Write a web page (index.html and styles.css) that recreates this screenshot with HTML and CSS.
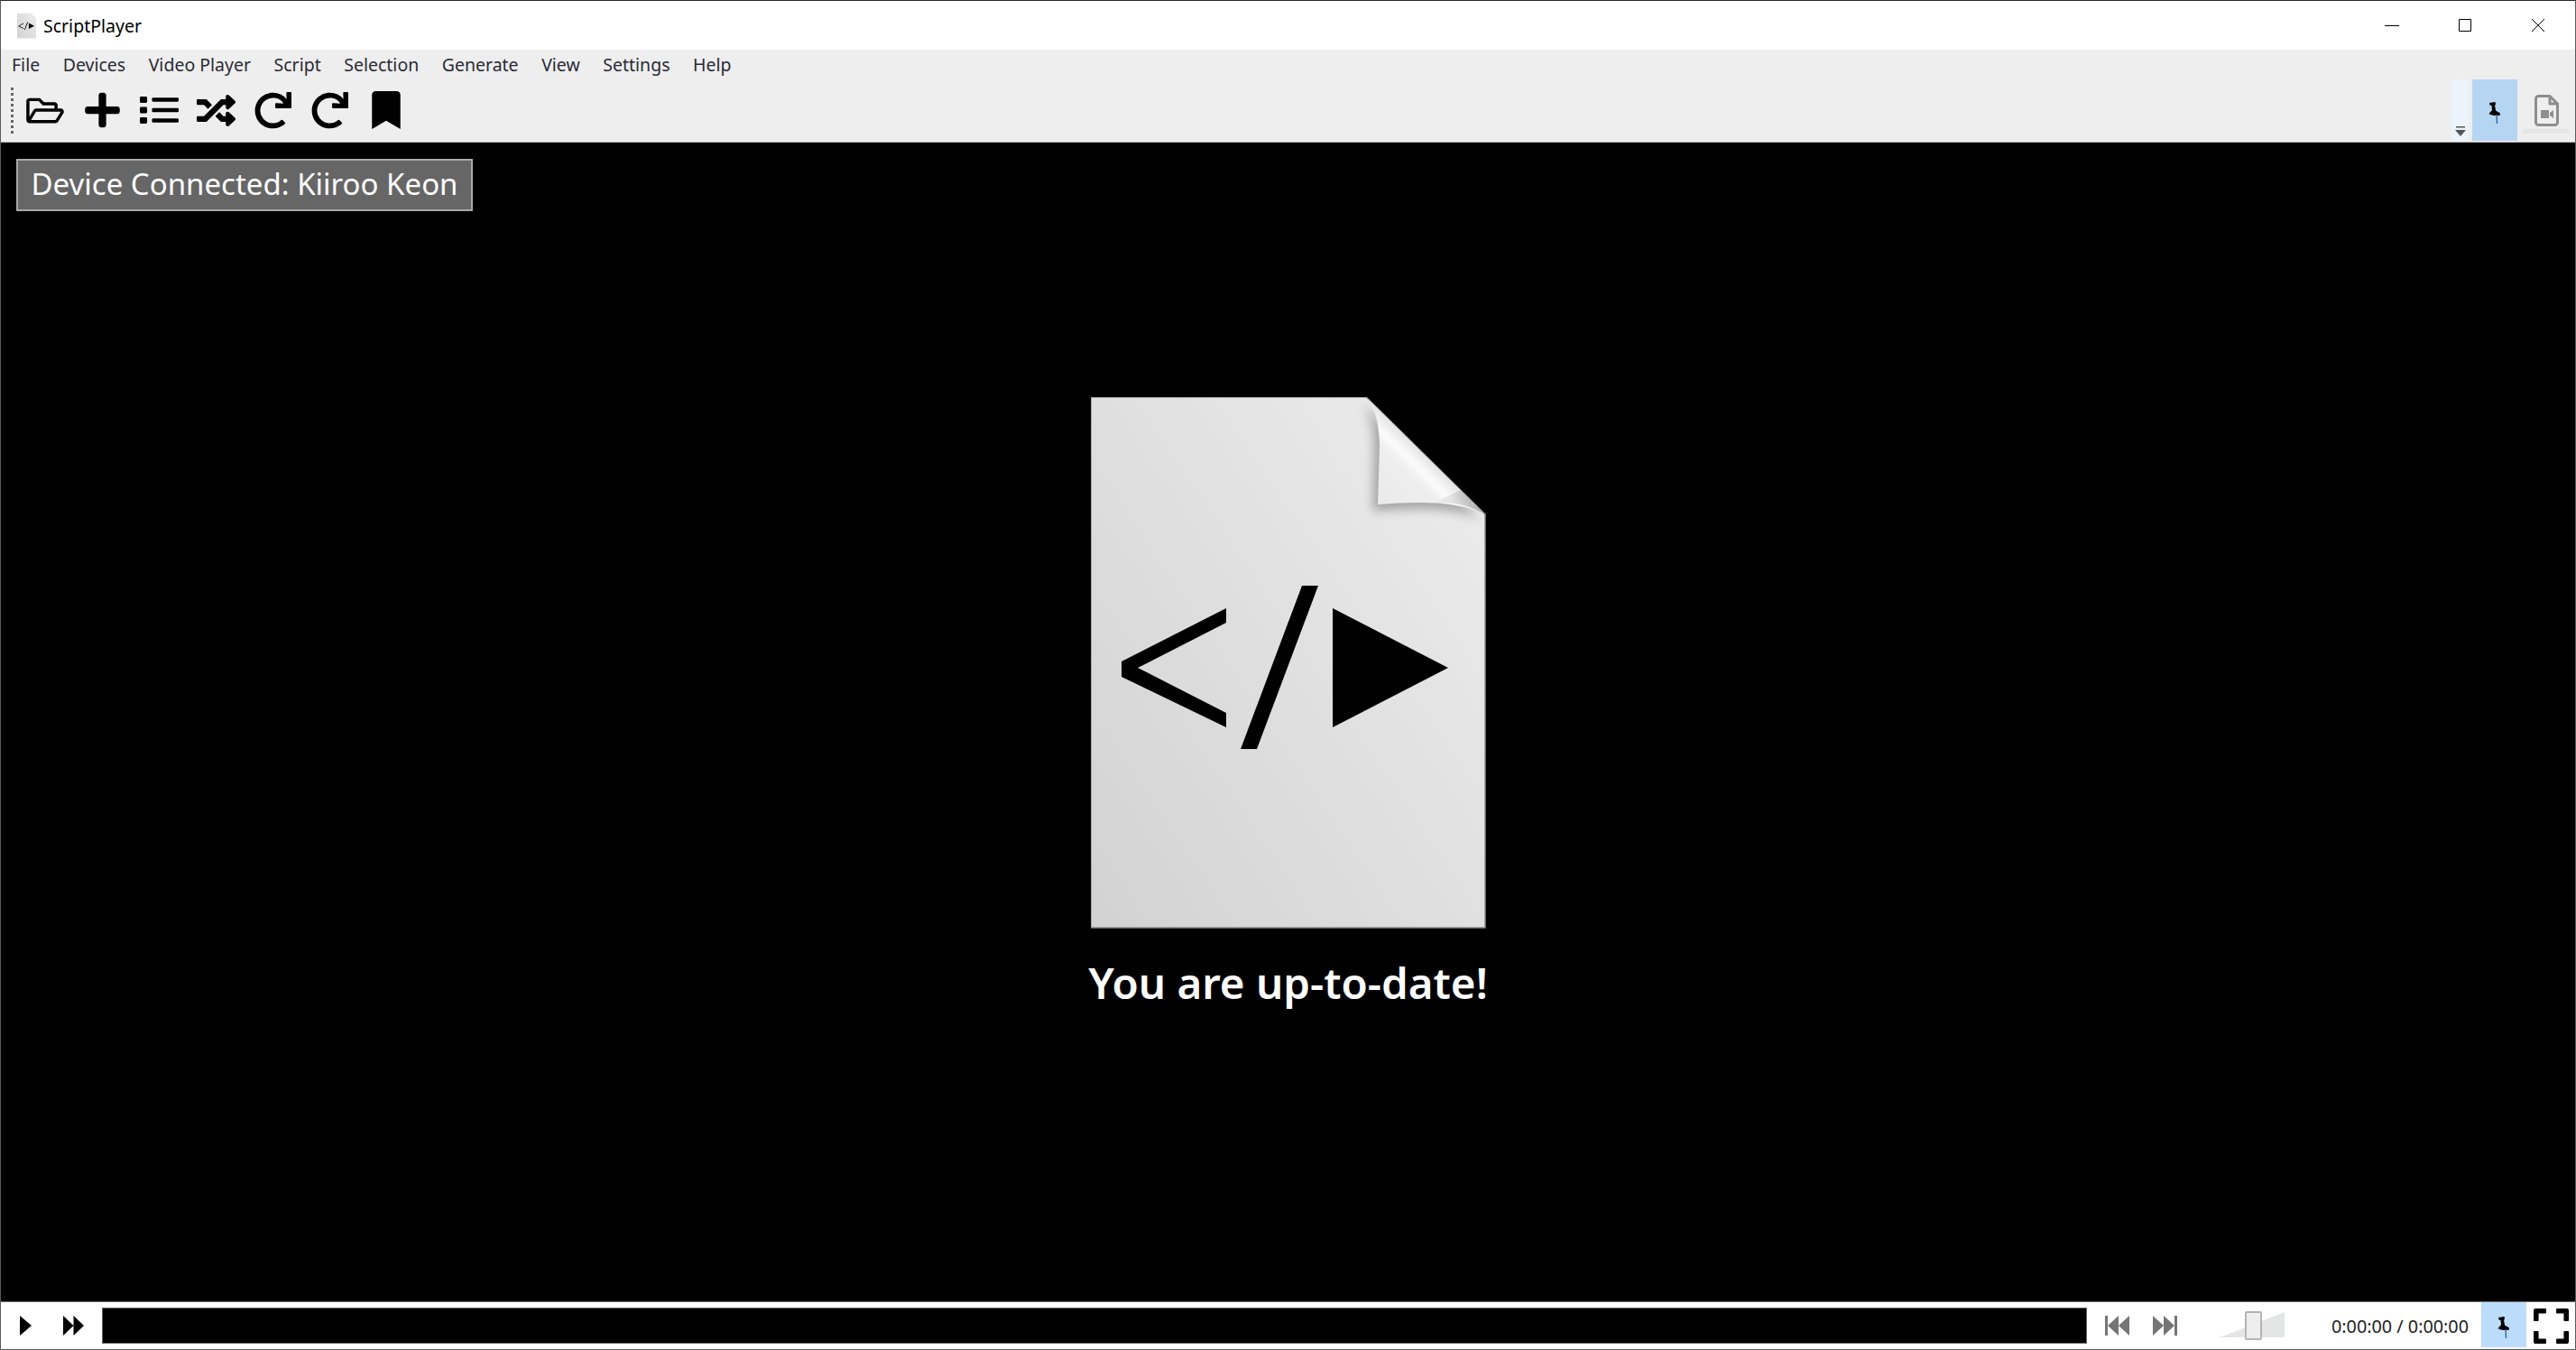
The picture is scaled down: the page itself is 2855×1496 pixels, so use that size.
FILE: index.html
```html
<!DOCTYPE html>
<html lang="en">
<head>
<meta charset="utf-8">
<title>ScriptPlayer</title>
<link rel="stylesheet" href="styles.css">
</head>
<body>
<svg class="defs" width="0" height="0" aria-hidden="true">
  <defs>
    <symbol id="pin" viewBox="0 0 16 24">
      <path d="M2 1 8.500 0 9 3 8 3.500 9 9.500 14 12.500 13.500 15 7 15 3 14 1.500 13 5 9 4.500 4 2.500 3.500Z" fill="#000"/>
      <path d="M10 14 10.500 24" stroke="#3a6ea5" stroke-width="1.500" fill="none"/>
    </symbol>
    <symbol id="redo" viewBox="0 0 512 512">
      <path d="M500.33 0h-47.41a12 12 0 0 0-12 12.57l4 82.76A247.42 247.42 0 0 0 256 8C119.34 8 8.9 119.53 8 256.19 7.1 393.07 118.1 504 256 504a247.1 247.1 0 0 0 166.18-63.91 12 12 0 0 0 .48-17.43l-34-34a12 12 0 0 0-16.38-.55A176 176 0 1 1 402.1 157.8l-101.53-4.87a12 12 0 0 0-12.57 12v47.41a12 12 0 0 0 12 12h200.33a12 12 0 0 0 12-12V12a12 12 0 0 0-12-12z"/>
    </symbol>
    <symbol id="doc" viewBox="0 0 438 589">
      <path d="M0 0H305L437 130V588H0Z" fill="url(#page)" stroke="#8c8c8c" stroke-width="1.500"/>
      <path d="M34 293 150 234V250L52 300 150 350V366L34 310Z"/>
      <path d="M234 209H252L184 390H166Z"/>
      <path d="M268 234 396 300 268 366Z"/>
    </symbol>
    <linearGradient id="page" x1="0" y1="1" x2="1" y2="0.1">
      <stop offset="0" stop-color="#d2d2d2"/>
      <stop offset="0.55" stop-color="#e0e0e0"/>
      <stop offset="1" stop-color="#ececec"/>
    </linearGradient>
    <linearGradient id="fold" x1="0" y1="1" x2="1" y2="0">
      <stop offset="0" stop-color="#e8e8e8"/>
      <stop offset="0.35" stop-color="#eeeeee"/>
      <stop offset="0.42" stop-color="#fbfbfb"/>
      <stop offset="0.5" stop-color="#e4e4e4"/>
      <stop offset="0.56" stop-color="#d8d8d8"/>
      <stop offset="1" stop-color="#d8d8d8"/>
    </linearGradient>
    <linearGradient id="foldTip" x1="0" y1="0" x2="1" y2="0">
      <stop offset="0" stop-color="#999" stop-opacity="0"/>
      <stop offset="1" stop-color="#999" stop-opacity=".7"/>
    </linearGradient>
    <filter id="soft" x="-30%" y="-30%" width="160%" height="160%"><feGaussianBlur stdDeviation="6"/></filter>
    <clipPath id="pageclip"><path d="M0 0H305L437 130V588H0Z"/></clipPath>
  </defs>
</svg>

<div class="window">
  <header class="titlebar">
    <svg class="app-icon" viewBox="0 0 438 589"><use href="#doc"/></svg>
    <span class="app-title">ScriptPlayer</span>
    <div class="win-controls">
      <svg class="win-btn" viewBox="0 0 16 16"><path d="M0 8.500H16" stroke="#000" fill="none"/></svg>
      <svg class="win-btn" viewBox="0 0 16 16"><path d="M1.500 1.500H14.500V14.500H1.500Z" stroke="#000" fill="none"/></svg>
      <svg class="win-btn" viewBox="0 0 16 16"><path d="M1 1 15 15M15 1 1 15" stroke="#000" fill="none"/></svg>
    </div>
  </header>

  <nav class="menubar">
    <span class="menu-item">File</span>
    <span class="menu-item">Devices</span>
    <span class="menu-item">Video Player</span>
    <span class="menu-item">Script</span>
    <span class="menu-item">Selection</span>
    <span class="menu-item">Generate</span>
    <span class="menu-item">View</span>
    <span class="menu-item">Settings</span>
    <span class="menu-item">Help</span>
  </nav>

  <div class="toolbar">
    <div class="gripper"></div>
    <div class="tool"><svg class="ic-folder" viewBox="0 0 576 512"><path d="M527.9 224H480v-48c0-26.5-21.5-48-48-48H272l-64-64H48C21.5 64 0 85.5 0 112v288c0 26.5 21.500 48 48 48h400c16.500 0 31.900-8.500 40.700-22.600l79.900-128c20-31.900-3-73.400-40.700-73.400zM48 118c0-3.300 2.700-6 6-6h134.100l64 64H426c3.300 0 6 2.700 6 6v42H152c-16.800 0-32.400 8.800-41.100 23.200L48 351.400zm400 282H72l77.200-128H528z"/></svg></div>
    <div class="tool"><svg class="ic-plus" viewBox="0 0 448 512"><path d="M416 208H272V64c0-17.670-14.330-32-32-32h-32c-17.670 0-32 14.330-32 32v144H32c-17.670 0-32 14.330-32 32v32c0 17.670 14.330 32 32 32h144v144c0 17.670 14.330 32 32 32h32c17.670 0 32-14.330 32-32V304h144c17.670 0 32-14.330 32-32v-32c0-17.670-14.330-32-32-32z"/></svg></div>
    <div class="tool"><svg class="ic-list" viewBox="0 48 512 416" preserveAspectRatio="none"><path d="M80 368H16a16 16 0 0 0-16 16v64a16 16 0 0 0 16 16h64a16 16 0 0 0 16-16v-64a16 16 0 0 0-16-16zm0-320H16A16 16 0 0 0 0 64v64a16 16 0 0 0 16 16h64a16 16 0 0 0 16-16V64a16 16 0 0 0-16-16zm0 160H16a16 16 0 0 0-16 16v64a16 16 0 0 0 16 16h64a16 16 0 0 0 16-16v-64a16 16 0 0 0-16-16zm416 176H176a16 16 0 0 0-16 16v32a16 16 0 0 0 16 16h320a16 16 0 0 0 16-16v-32a16 16 0 0 0-16-16zm0-320H176a16 16 0 0 0-16 16v32a16 16 0 0 0 16 16h320a16 16 0 0 0 16-16V80a16 16 0 0 0-16-16zm0 160H176a16 16 0 0 0-16 16v32a16 16 0 0 0 16 16h320a16 16 0 0 0 16-16v-32a16 16 0 0 0-16-16z"/></svg></div>
    <div class="tool"><svg class="ic-shuffle" viewBox="0 32 512 448" preserveAspectRatio="none"><path d="M504.971 359.029c9.373 9.373 9.373 24.569 0 33.941l-80 79.984c-15.010 15.010-40.971 4.490-40.971-16.971V416h-58.785a12.004 12.004 0 0 1-8.773-3.812l-70.556-75.596 53.333-57.143L352 336h32v-39.981c0-21.438 25.943-31.998 40.971-16.971l80 79.981zM12 176h84l52.781 56.551 53.333-57.143-70.556-75.596A11.999 11.999 0 0 0 122.785 96H12c-6.627 0-12 5.373-12 12v56c0 6.627 5.373 12 12 12zm372 0v39.984c0 21.460 25.961 31.980 40.971 16.971l80-79.984c9.373-9.373 9.373-24.569 0-33.941l-80-79.981C409.943 24.021 384 34.582 384 56.019V96h-58.785a12.004 12.004 0 0 0-8.773 3.812L96 336H12c-6.627 0-12 5.373-12 12v56c0 6.627 5.373 12 12 12h110.785c3.326 0 6.503-1.381 8.773-3.812L352 176h32z"/></svg></div>
    <div class="tool"><svg class="ic-redo"><use href="#redo"/></svg></div>
    <div class="tool"><svg class="ic-redo"><use href="#redo"/></svg></div>
    <div class="tool"><svg class="ic-bookmark" viewBox="0 0 384 512"><path d="M0 512V48C0 21.490 21.490 0 48 0h288c26.510 0 48 21.490 48 48v464L192 400 0 512z"/></svg></div>

    <div class="toolbar-right">
      <div class="overflow"><svg class="overflow-glyph" viewBox="0 0 12 11"><path d="M1 0H11V1.500H1ZM0 4H12L6 11Z" fill="#555"/></svg></div>
      <div class="pin-btn"><svg class="pin-ic"><use href="#pin"/></svg></div>
      <div class="side-tool">
        <svg class="ic-filevideo" viewBox="0 0 27 35"><path d="M4 1.500H17L25.500 10V30.500A3 3 0 0 1 22.500 33.500H4.500A3 3 0 0 1 1.500 30.500V4.500A3 3 0 0 1 4.500 1.500ZM17 1.500V10H25.500" fill="none" stroke="#8e8e8e" stroke-width="3" stroke-linejoin="round"/><path d="M7 17H16V26H7ZM17 20 21 17V26L17 23Z" fill="#8e8e8e"/></svg>
        <div class="side-tool-bar"></div>
      </div>
    </div>
  </div>

  <main class="stage">
    <div class="notice">Device Connected: Kiiroo Keon</div>
    <svg class="doc" viewBox="0 0 438 589">
      <use href="#doc"/>
      <g clip-path="url(#pageclip)">
        <path d="M305 0C316 14 319 28 319 50L318 120C360 117 405 114 437 130Z" transform="translate(-5 6)" fill="#000" opacity=".3" filter="url(#soft)"/>
      </g>
      <path d="M305 0C316 14 319 28 320 53L318 119C360 116 405 114 437 130Z" fill="url(#fold)"/>
      <path d="M380 117C405 116 420 121 437 130L410 103Z" fill="url(#foldTip)"/>
    </svg>
    <h1 class="status">You are up-to-date!</h1>
  </main>

  <footer class="playbar">
    <svg class="ic-play" viewBox="0 0 13 22"><path d="M0 0 13 11 0 22Z"/></svg>
    <svg class="ic-ff" viewBox="0 0 24 22" preserveAspectRatio="none"><path d="M0 0 12 11 0 22ZM12 0 24 11 12 22Z"/></svg>
    <div class="seek"></div>
    <svg class="ic-skip-prev" viewBox="0 0 27 22"><path d="M0 0H3V22H0ZM15 0V22L3 11ZM27 0V22L15 11Z" fill="#757575"/></svg>
    <svg class="ic-skip-next" viewBox="0 0 27 22"><path d="M27 0H24V22H27ZM12 0V22L24 11ZM0 0V22L12 11Z" fill="#757575"/></svg>
    <div class="volume">
      <svg class="vol-track" viewBox="0 0 72 28" preserveAspectRatio="none"><path d="M0 28 72 0V28Z" fill="#e4e6e6"/></svg>
      <div class="vol-thumb"></div>
    </div>
    <span class="time">0:00:00 / 0:00:00</span>
    <div class="pin-btn pin-btn-small"><svg class="pin-ic"><use href="#pin"/></svg></div>
    <svg class="ic-expand" viewBox="0 32 448 448" preserveAspectRatio="none"><path d="M0 180V56c0-13.300 10.700-24 24-24h124c6.600 0 12 5.400 12 12v40c0 6.600-5.400 12-12 12H64v84c0 6.600-5.400 12-12 12H12c-6.600 0-12-5.400-12-12zm288-136v40c0 6.600 5.400 12 12 12h84v84c0 6.600 5.400 12 12 12h40c6.600 0 12-5.400 12-12V56c0-13.300-10.700-24-24-24H300c-6.600 0-12 5.400-12 12zm148 276h-40c-6.600 0-12 5.400-12 12v84h-84c-6.600 0-12 5.400-12 12v40c0 6.600 5.400 12 12 12h124c13.300 0 24-10.700 24-24V332c0-6.600-5.400-12-12-12zM160 468v-40c0-6.600-5.400-12-12-12H64v-84c0-6.600-5.400-12-12-12H12c-6.600 0-12 5.400-12 12v124c0 13.300 10.700 24 24 24h124c6.600 0 12-5.400 12-12z"/></svg>
  </footer>
</div>
</body>
</html>
```

FILE: styles.css
```css
* { box-sizing: border-box; }
html, body { margin: 0; height: 100%; overflow: hidden; background: #000; }
body { font-family: "Noto Sans", "Open Sans", sans-serif; }
.defs { position: absolute; }

.window {
  height: 1496px;
  display: flex;
  flex-direction: column;
  border: 1px solid #5a5a5a;
  border-top-color: #26262c;
  background: #fff;
}

.titlebar {
  height: 54px;
  flex: none;
  display: flex;
  align-items: center;
  background: #fff;
  padding-left: 18px;
}
.app-icon { width: 21px; height: 29px; }
.app-title { margin-left: 8px; font-size: 19.500px; color: #000; }
.win-controls { margin-left: auto; display: flex; }
.win-btn { width: 16px; height: 16px; margin-left: 32px; margin-right: 33px; }

.menubar {
  height: 45px;
  flex: none;
  display: flex;
  align-items: center;
  background: #eee;
  padding-left: 12px;
  padding-bottom: 13px;
  gap: 25.500px;
  font-size: 19.500px;
  color: #2a2a35;
}

.toolbar {
  height: 58px;
  flex: none;
  display: flex;
  align-items: center;
  background: #eee;
  border-bottom: 1px solid #b9b9b9;
  padding-left: 11px;
}
.gripper {
  width: 3px;
  height: 51px;
  margin-top: -13px;
  margin-right: 3.500px;
  background: repeating-linear-gradient(#666 0 3px, transparent 3px 6px);
}
.tool {
  width: 63px;
  height: 46px;
  margin-top: -13px;
  display: flex;
  align-items: center;
  justify-content: center;
}
.ic-folder { width: 42px; height: 37px; }
.ic-plus { width: 39px; height: 44px; }
.ic-list { width: 43px; height: 30px; }
.ic-shuffle { width: 43px; height: 35px; }
.ic-redo { width: 41px; height: 41px; }
.ic-bookmark { width: 32px; height: 42px; }

.toolbar-right {
  margin-left: auto;
  align-self: stretch;
  display: flex;
  margin-top: -12px;
  margin-bottom: 1px;
}
.overflow {
  width: 19px;
  background: #edf3fb;
  display: flex;
  align-items: flex-end;
  justify-content: center;
  padding-bottom: 5px;
  margin-right: 4px;
}
.overflow-glyph { width: 12px; height: 11px; }
.pin-btn {
  width: 50px;
  background: #b5d5f3;
  display: flex;
  align-items: center;
  justify-content: center;
  padding-top: 6px;
}
.pin-ic { width: 16px; height: 24px; }
.side-tool {
  width: 64px;
  display: flex;
  flex-direction: column;
  align-items: center;
  padding-top: 17px;
}
.ic-filevideo { width: 27px; height: 35px; }
.side-tool-bar { width: 52px; height: 5px; margin-top: 3px; background: #e6e6e6; }

.stage {
  flex: 1;
  min-height: 0;
  position: relative;
  background: #000;
  display: flex;
  flex-direction: column;
  align-items: center;
  padding-top: 282px;
}
.notice {
  position: absolute;
  left: 17px;
  top: 18px;
  width: 506px;
  height: 58px;
  display: flex;
  align-items: center;
  justify-content: center;
  padding-bottom: 3px;
  background: #666;
  border: 2px solid #a8a8a8;
  color: #fff;
  font-size: 33px;
  white-space: nowrap;
}
.doc { width: 438px; height: 589px; flex: none; }
.status {
  margin: 29px 0 0;
  font-size: 47.500px;
  font-weight: 600;
  line-height: 62px;
  color: #fff;
  white-space: nowrap;
}

.playbar {
  height: 53px;
  flex: none;
  display: flex;
  align-items: center;
  background: #fff;
  border-top: 1px solid #6a6a6a;
}
.ic-play { width: 13px; height: 22px; margin-left: 21px; flex: none; }
.ic-ff { width: 23px; height: 22px; margin-left: 35px; flex: none; }
.seek {
  flex: 1;
  height: 40px;
  margin-left: 20px;
  background: #000;
  border: 1px solid #666;
}
.ic-skip-prev { width: 27px; height: 22px; margin-left: 20px; flex: none; }
.ic-skip-next { width: 27px; height: 22px; margin-left: 26px; flex: none; }
.volume { position: relative; width: 72px; height: 32px; margin-left: 47px; flex: none; }
.vol-track { width: 72px; height: 28px; display: block; margin-top: 1px; }
.vol-thumb {
  position: absolute;
  left: 28px;
  top: 0;
  width: 19px;
  height: 32px;
  background: #eee;
  border: 2px solid #b4b4b4;
  border-radius: 2px;
}
.time {
  margin-left: 52px;
  width: 151px;
  flex: none;
  font-size: 19.800px;
  color: #222;
  white-space: nowrap;
}
.pin-btn-small {
  margin-left: 15px;
  height: 50px;
  flex: none;
  background: #bcdcfc;
  align-self: flex-start;
  padding-top: 5px;
}
.ic-expand { width: 39px; height: 39px; margin-left: 8px; margin-right: 7px; flex: none; }
```
